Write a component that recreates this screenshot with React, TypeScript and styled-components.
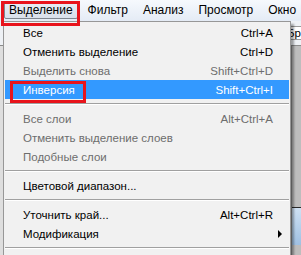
import React from 'react';
import styled, { createGlobalStyle } from 'styled-components';

type Entry =
  | { kind: 'item'; label: string; shortcut?: string; disabled?: boolean; active?: boolean; submenu?: boolean }
  | { kind: 'sep' };

const entries: Entry[] = [
  { kind: 'item', label: 'Все', shortcut: 'Ctrl+A' },
  { kind: 'item', label: 'Отменить выделение', shortcut: 'Ctrl+D' },
  { kind: 'item', label: 'Выделить снова', shortcut: 'Shift+Ctrl+D', disabled: true },
  { kind: 'item', label: 'Инверсия', shortcut: 'Shift+Ctrl+I', active: true },
  { kind: 'sep' },
  { kind: 'item', label: 'Все слои', shortcut: 'Alt+Ctrl+A', disabled: true },
  { kind: 'item', label: 'Отменить выделение слоев', disabled: true },
  { kind: 'item', label: 'Подобные слои', disabled: true },
  { kind: 'sep' },
  { kind: 'item', label: 'Цветовой диапазон...' },
  { kind: 'sep' },
  { kind: 'item', label: 'Уточнить край...', shortcut: 'Alt+Ctrl+R' },
  { kind: 'item', label: 'Модификация', submenu: true },
  { kind: 'sep' },
];

const menus = ['Выделение', 'Фильтр', 'Анализ', 'Просмотр', 'Окно'];

export default function App() {
  return (
    <>
      <GlobalStyle />
      <Window>
        <MenuBar>
          {menus.map((m, i) => (
            <MenuTitle key={m} open={i === 0}>
              {m}
            </MenuTitle>
          ))}
        </MenuBar>
        <OptionsBar>
          <Field>Браш</Field>
        </OptionsBar>
        <Workspace>
          <ToolColumn />
          <Canvas />
          <SidePanel>
            <PanelHeader />
            <PanelBody />
          </SidePanel>
        </Workspace>

        <Dropdown>
          {entries.map((e, i) =>
            e.kind === 'sep' ? (
              <Separator key={i} />
            ) : (
              <Item key={i} disabled={e.disabled} active={e.active} submenu={e.submenu}>
                <span>{e.label}</span>
                {e.shortcut && <span>{e.shortcut}</span>}
                {e.submenu && <SubArrow />}
              </Item>
            )
          )}
        </Dropdown>

        <Callout style={{ left: 1, top: 1, width: 79, height: 25 }} />
        <Callout style={{ left: 10, top: 81, width: 76, height: 22 }} />
      </Window>
    </>
  );
}

const GlobalStyle = createGlobalStyle`
  html, body {
    margin: 0;
    padding: 0;
    overflow: hidden;
  }
  body {
    font-family: "Liberation Sans", Arial, sans-serif;
    font-size: 11.5px;
  }
`;

const Window = styled.div`
  position: relative;
  width: 301px;
  height: 255px;
  overflow: hidden;
  display: flex;
  flex-direction: column;
  background: #a3a3a3;
`;

const MenuBar = styled.div`
  height: 21px;
  flex: none;
  display: flex;
  align-items: center;
  gap: 5px;
  padding-left: 4px;
  font-size: 12px;
  background: linear-gradient(#f6f9fd, #e4ebf5);
`;

const MenuTitle = styled.div<{ open?: boolean }>`
  height: 15px;
  line-height: 15px;
  padding: 0 4px;
  color: #000;
  white-space: nowrap;
  border: 1px solid ${({ open }) => (open ? '#7f8790' : 'transparent')};
  border-radius: 2px;
  background: ${({ open }) => (open ? 'linear-gradient(#e8edf4, #d9e0ea)' : 'transparent')};
`;

const OptionsBar = styled.div`
  height: 24px;
  flex: none;
  display: flex;
  align-items: center;
  justify-content: flex-end;
  background: #eef1f5;
  border-bottom: 1px solid #8a8a8a;
`;

const Field = styled.div`
  width: 14px;
  height: 12px;
  line-height: 12px;
  overflow: hidden;
  white-space: nowrap;
  padding-left: 3px;
  border: 1px solid #9a9a9a;
  border-right: none;
  background: #fff;
  color: #000;
`;

const Workspace = styled.div`
  flex: 1;
  display: flex;
`;

const ToolColumn = styled.div`
  width: 3px;
  background: #dedede;
`;

const Canvas = styled.div`
  flex: 1;
  background: #9c9c9c;
`;

const SidePanel = styled.div`
  width: 9px;
  display: flex;
  flex-direction: column;
  background: #bdbdbd;
  border-left: 1px solid #8e8e8e;
  padding-top: 161px;
`;

const PanelHeader = styled.div`
  height: 1px;
  background: #2a2a2a;
`;

const PanelBody = styled.div`
  height: 37px;
  background: linear-gradient(#cfe1f3, #9fc0e2);
`;

const Dropdown = styled.div`
  position: absolute;
  left: 3px;
  top: 21px;
  width: 284px;
  padding: 1px 1px 20px;
  border: 1px solid #979797;
  background: #f1f1f1;
  box-shadow: 3px 3px 2px rgba(0, 0, 0, 0.35);
`;

const Item = styled.div<{ disabled?: boolean; active?: boolean; submenu?: boolean }>`
  height: 19px;
  display: flex;
  align-items: center;
  justify-content: space-between;
  padding: 1px ${({ submenu }) => (submenu ? 7 : 16)}px 0 18px;
  box-sizing: border-box;
  white-space: nowrap;
  color: ${({ disabled, active }) => (active ? '#fff' : disabled ? '#6d6d6d' : '#000')};
  background: ${({ active }) => (active ? '#3399ff' : 'transparent')};
`;

const SubArrow = styled.span`
  width: 0;
  height: 0;
  border-top: 4px solid transparent;
  border-bottom: 4px solid transparent;
  border-left: 4px solid #000;
`;

const Separator = styled.div`
  height: 0;
  margin: 4px 0;
  border-top: 1px solid #a0a0a0;
  border-bottom: 1px solid #fff;
`;

const Callout = styled.div`
  position: absolute;
  box-sizing: border-box;
  border: 3px solid #e8141c;
`;
